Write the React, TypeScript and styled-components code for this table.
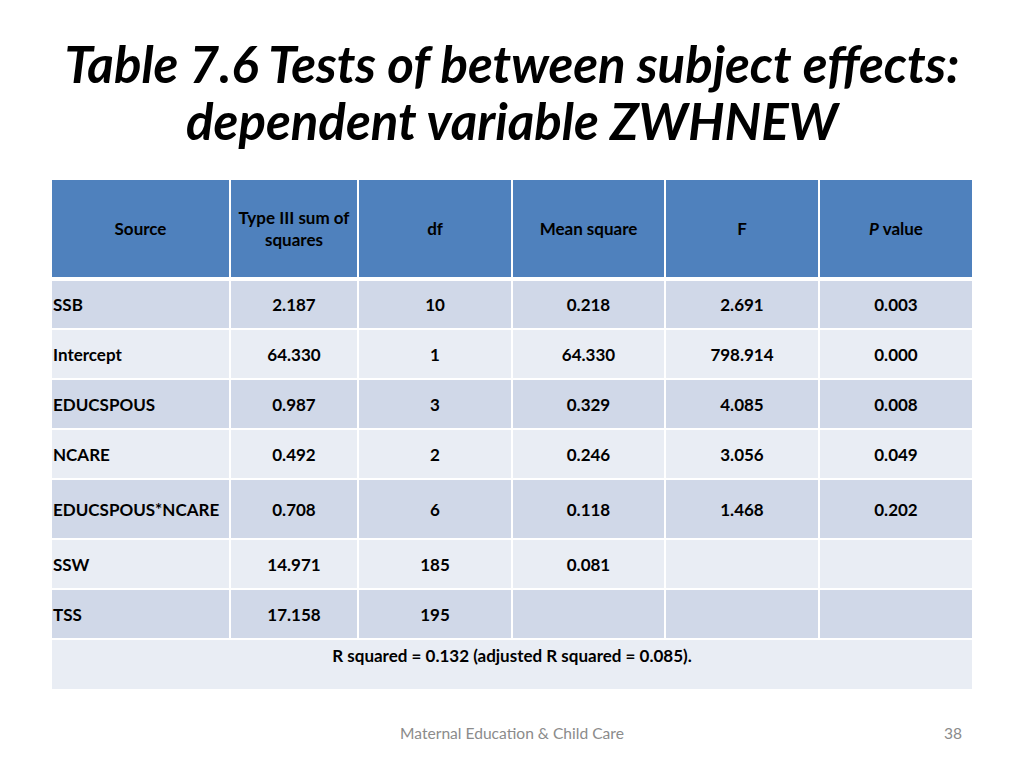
import React from "react";
import styled, { createGlobalStyle } from "styled-components";

const Global = createGlobalStyle`
  html, body { margin: 0; padding: 0; background: #ffffff; }
  body { font-family: Lato, "Open Sans", sans-serif; }
`;

const Slide = styled.div`
  width: 1024px;
  height: 768px;
  display: flex;
  flex-direction: column;
  align-items: center;
  background: #ffffff;
`;

const Title = styled.h1`
  margin: 35px 0 0 0;
  font-family: Lato, sans-serif;
  font-style: italic;
  font-weight: 700;
  font-size: 51px;
  line-height: 57px;
  color: #000000;
  text-align: center;
  letter-spacing: 0;
`;

const Table = styled.table`
  margin-top: 31px;
  width: 920px;
  border-collapse: collapse;
  table-layout: fixed;
  font-family: Lato, sans-serif;
  font-weight: 700;
  font-size: 17px;
  color: #000000;
`;

const HeadCell = styled.th`
  background: #4f81bd;
  height: 97px;
  padding: 0 2px;
  border-left: 2px solid #ffffff;
  border-right: 2px solid #ffffff;
  border-bottom: 4px solid #ffffff;
  font-weight: 700;
  line-height: 22px;
  text-align: center;
  vertical-align: middle;
  &:first-child { border-left: none; }
  &:last-child { border-right: none; }
`;

const Row = styled.tr<{ $dark: boolean; $h: number }>`
  background: ${(p) => (p.$dark ? "#d0d8e8" : "#e9edf4")};
  height: ${(p) => p.$h}px;
`;

const Cell = styled.td<{ $left?: boolean }>`
  padding: 0 1px;
  border: 2px solid #ffffff;
  text-align: ${(p) => (p.$left ? "left" : "center")};
  vertical-align: middle;
  &:first-child { border-left: none; }
  &:last-child { border-right: none; }
`;

const NoteCell = styled.td`
  border-top: 2px solid #ffffff;
  text-align: center;
  vertical-align: top;
  padding-top: 5px;
`;

const Footer = styled.div`
  margin-top: auto;
  margin-bottom: 26px;
  width: 920px;
  display: grid;
  grid-template-columns: 1fr auto 1fr;
  font-family: Lato, sans-serif;
  font-size: 15.6px;
  color: #8b8b8b;
`;

const FooterCenter = styled.span`
  grid-column: 2;
`;

const PageNo = styled.span`
  grid-column: 3;
  justify-self: end;
  padding-right: 10px;
`;

const cols = [178, 128, 154, 153, 154, 153];

const rows: { name: string; vals: string[]; h: number }[] = [
  { name: "SSB", vals: ["2.187", "10", "0.218", "2.691", "0.003"], h: 50 },
  { name: "Intercept", vals: ["64.330", "1", "64.330", "798.914", "0.000"], h: 50 },
  { name: "EDUCSPOUS", vals: ["0.987", "3", "0.329", "4.085", "0.008"], h: 50 },
  { name: "NCARE", vals: ["0.492", "2", "0.246", "3.056", "0.049"], h: 50 },
  { name: "EDUCSPOUS*NCARE", vals: ["0.708", "6", "0.118", "1.468", "0.202"], h: 60 },
  { name: "SSW", vals: ["14.971", "185", "0.081", "", ""], h: 50 },
  { name: "TSS", vals: ["17.158", "195", "", "", ""], h: 50 },
];

export default function App() {
  return (
    <>
      <Global />
      <Slide>
        <Title>
          Table 7.6 Tests of between subject effects:
          <br />
          dependent variable ZWHNEW
        </Title>
        <Table>
          <colgroup>
            {cols.map((w, i) => (
              <col key={i} style={{ width: w }} />
            ))}
          </colgroup>
          <thead>
            <tr>
              <HeadCell>Source</HeadCell>
              <HeadCell>
                Type III sum of
                <br />
                squares
              </HeadCell>
              <HeadCell>df</HeadCell>
              <HeadCell>Mean square</HeadCell>
              <HeadCell>F</HeadCell>
              <HeadCell>
                <i>P</i> value
              </HeadCell>
            </tr>
          </thead>
          <tbody>
            {rows.map((r, i) => (
              <Row key={r.name} $dark={i % 2 === 0} $h={r.h}>
                <Cell $left>{r.name}</Cell>
                {r.vals.map((v, j) => (
                  <Cell key={j}>{v}</Cell>
                ))}
              </Row>
            ))}
            <Row $dark={false} $h={50}>
              <NoteCell colSpan={6}>
                R squared = 0.132 (adjusted R squared = 0.085).
              </NoteCell>
            </Row>
          </tbody>
        </Table>
        <Footer>
          <FooterCenter>Maternal Education &amp; Child Care</FooterCenter>
          <PageNo>38</PageNo>
        </Footer>
      </Slide>
    </>
  );
}
